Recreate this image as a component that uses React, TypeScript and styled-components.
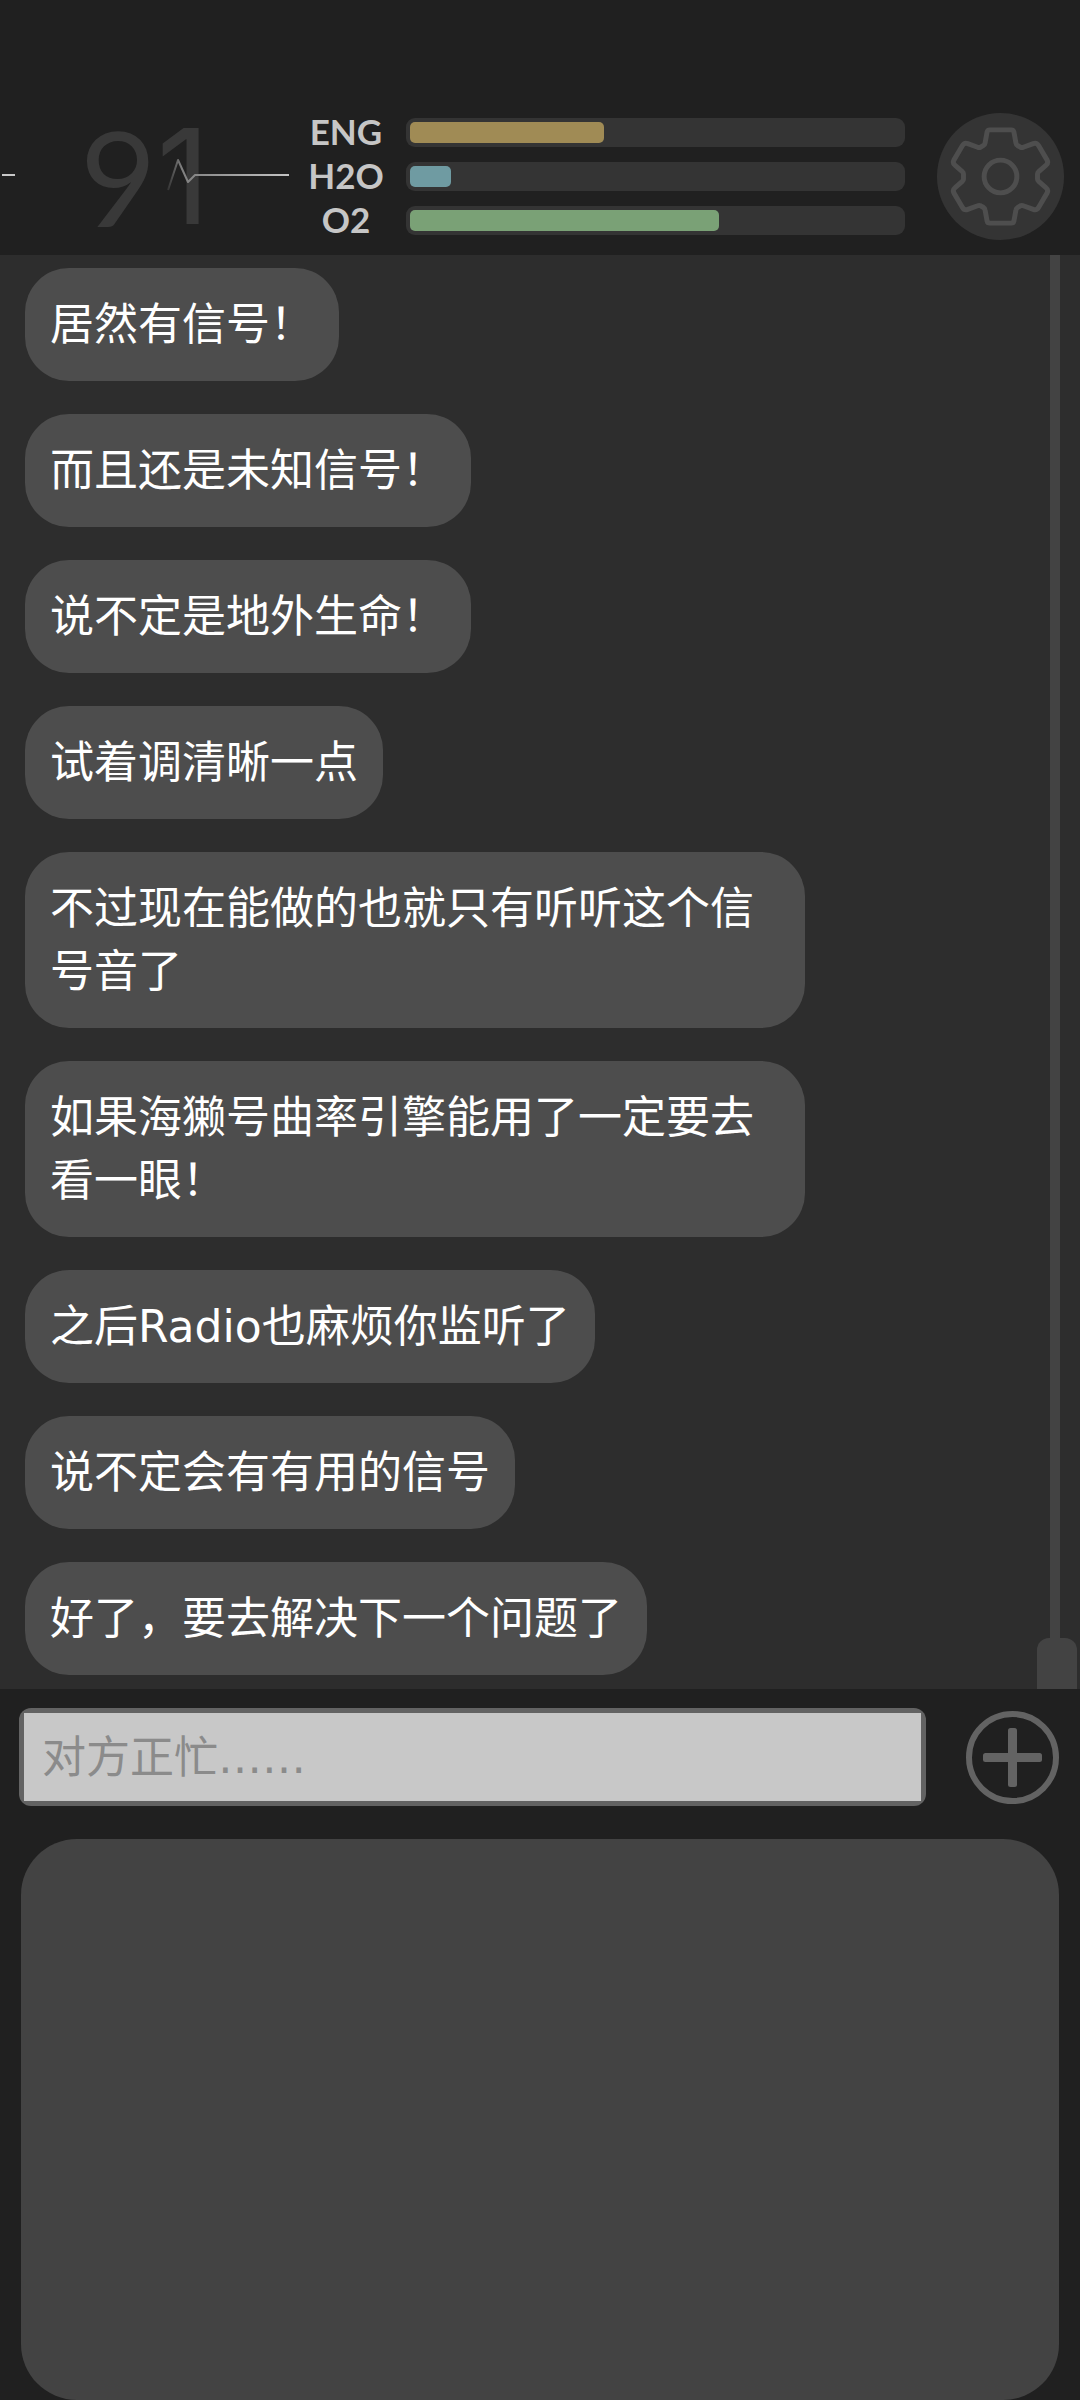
import React from "react";
import styled, { createGlobalStyle } from "styled-components";

const GlobalStyle = createGlobalStyle`
  *, *::before, *::after { box-sizing: border-box; }
  body {
    margin: 0;
    background: #202020;
    color: #ffffff;
    font-family: "DejaVu Sans", "Noto Sans CJK SC", sans-serif;
  }
`;

const Page = styled.div`
  display: flex;
  flex-direction: column;
  min-height: 100vh;
`;

const Header = styled.header`
  display: flex;
  align-items: center;
  padding: 113px 16px 15px 0;
`;

const Vitals = styled.div`
  position: relative;
  flex: none;
  width: 302px;
  height: 127px;
  padding-left: 80px;
`;

const HeartRate = styled.span`
  display: flex;
  color: #393939;
  font-family: Lato, sans-serif;
  font-size: 132px;
  line-height: 127px;
`;

const Units = styled.span`
  font-family: Inter, sans-serif;
`;

const Pulse = styled.svg`
  position: absolute;
  inset: 0;
  width: 302px;
  height: 127px;
`;

const Gauges = styled.div`
  flex: 1;
  display: grid;
  gap: 15px;
`;

const GaugeRow = styled.div`
  display: grid;
  grid-template-columns: 88px 1fr;
  column-gap: 16px;
`;

const GaugeLabel = styled.span`
  color: #c6c6c6;
  font-family: Lato, sans-serif;
  font-size: 35px;
  font-weight: 700;
  line-height: 27px;
  text-align: center;
`;

const GaugeTrack = styled.div`
  height: 29px;
  padding: 4px;
  border-radius: 9px;
  background: #343434;
`;

const GaugeFill = styled.div<{ $color: string }>`
  height: 100%;
  border-radius: 5px;
  background: ${({ $color }) => $color};
`;

const SettingsButton = styled.button`
  flex: none;
  width: 127px;
  height: 127px;
  margin-left: 32px;
  padding: 0;
  border: 0;
  border-radius: 50%;
  background: #343434;
  color: #4e4e4e;

  svg { display: block; width: 100%; height: 100%; }
`;

const Chat = styled.main`
  display: flex;
  justify-content: space-between;
  background: #2d2d2d;
`;

const Messages = styled.ul`
  flex: 1;
  display: flex;
  flex-direction: column;
  align-items: flex-start;
  gap: 33px;
  margin: 0;
  padding: 13px 25px 14px;
  list-style: none;
`;

const Bubble = styled.li`
  max-width: 780px;
  padding: 25px;
  border-radius: 44px;
  background: #4d4d4d;
  font-size: 44px;
  line-height: 63px;
  word-break: break-all;
`;

const ScrollBar = styled.div`
  display: flex;
  flex-direction: column;
  width: 40px;
  margin-right: 3px;
`;

const ScrollRail = styled.div`
  flex: 1;
  align-self: flex-end;
  width: 10px;
  margin-right: 17px;
  background: #434343;
`;

const ScrollThumb = styled.div`
  height: 51px;
  border-radius: 12px 12px 0 0;
  background: #434343;
`;

const Composer = styled.form`
  display: flex;
  align-items: center;
  gap: 40px;
  padding: 19px 21px 33px 19px;
`;

const Field = styled.label`
  flex: 1;
  display: flex;
  height: 98px;
  padding: 5px;
  border-radius: 12px;
  background: #636363;
`;

const TextInput = styled.input`
  flex: 1;
  min-width: 0;
  padding: 0 18px;
  border: 0;
  border-radius: 0;
  outline: 0;
  background: #c8c8c8;
  color: #323232;
  font-family: "DejaVu Sans", "Noto Sans CJK SC", sans-serif;
  font-size: 44px;

  &::placeholder { color: #8b8b8b; opacity: 1; }
`;

const AddButton = styled.button`
  flex: none;
  width: 93px;
  height: 93px;
  padding: 0;
  border: 0;
  background: none;
  color: #636363;

  svg { display: block; width: 100%; height: 100%; }
`;

const ReplyPanel = styled.section`
  flex: 1;
  min-height: 160px;
  margin: 0 21px;
  border-radius: 56px;
  background: #434343;
`;

const gauges = [
  { name: "ENG", level: 39.6, color: "#a08b55" },
  { name: "H2O", level: 8.4, color: "#6f9ba2" },
  { name: "O2", level: 63, color: "#7aa176" },
];

const messages = [
  "居然有信号！",
  "而且还是未知信号！",
  "说不定是地外生命！",
  "试着调清晰一点",
  "不过现在能做的也就只有听听这个信号音了",
  "如果海獭号曲率引擎能用了一定要去看一眼！",
  "之后Radio也麻烦你监听了",
  "说不定会有有用的信号",
  "好了，要去解决下一个问题了",
];

function PulseLine() {
  return (
    <Pulse viewBox="0 0 302 127" fill="none" strokeWidth="2" aria-hidden="true">
      <defs>
        <linearGradient id="trail" gradientUnits="userSpaceOnUse" x1="167" y1="0" x2="289" y2="0">
          <stop offset="0" stopColor="#303030" />
          <stop offset="0.12" stopColor="#808080" />
          <stop offset="1" stopColor="#c4c4c4" />
        </linearGradient>
      </defs>
      <path d="M2 62H15" stroke="#c8c8c8" />
      <path d="M168 77L178 47L188 69L195 62H289" stroke="url(#trail)" strokeLinejoin="round" />
    </Pulse>
  );
}

function GearIcon() {
  return (
    <svg viewBox="-64 -64 128 128" fill="none" stroke="currentColor" strokeWidth="5" strokeLinejoin="round" aria-hidden="true">
      <path d="M-11 -47H11Q13 -47 13.5 -45L15.5 -34Q15.800 -32 17.500 -31L20 -29.500Q21.500 -28.800 23 -29.500L33 -33.200Q36.500 -34.500 38.500 -31L47 -16.500Q48.500 -13.500 46 -11.500L38.500 -5Q37.300 -4 37.300 -2.500V2.500Q37.300 4 38.500 5L46 11.500Q48.500 13.500 47 16.500L38.500 31Q36.500 34.500 33 33.200L23 29.500Q21.500 28.800 20 29.500L17.500 31Q15.800 32 15.500 34L13.500 45Q13 47 11 47H-11Q-13 47 -13.500 45L-15.500 34Q-15.800 32 -17.500 31L-20 29.500Q-21.500 28.800 -23 29.500L-33 33.200Q-36.500 34.500 -38.500 31L-47 16.500Q-48.500 13.500 -46 11.500L-38.500 5Q-37.300 4 -37.300 2.500V-2.500Q-37.300 -4 -38.500 -5L-46 -11.500Q-48.500 -13.500 -47 -16.500L-38.500 -31Q-36.500 -34.500 -33 -33.200L-23 -29.500Q-21.500 -28.800 -20 -29.500L-17.500 -31Q-15.800 -32 -15.500 -34L-13.500 -45Q-13 -47 -11 -47Z" />
      <circle r="16.500" />
    </svg>
  );
}

function PlusIcon() {
  return (
    <svg viewBox="0 0 93 93" fill="none" stroke="currentColor" aria-hidden="true">
      <circle cx="46.500" cy="46.500" r="43.500" strokeWidth="6" />
      <g fill="currentColor" stroke="none">
        <rect x="17" y="42" width="59" height="9" rx="2.500" />
        <rect x="42" y="17" width="9" height="59" rx="2.500" />
      </g>
    </svg>
  );
}

export default function App() {
  return (
    <Page>
      <GlobalStyle />
      <Header>
        <Vitals>
          <HeartRate>
            9<Units>1</Units>
          </HeartRate>
          <PulseLine />
        </Vitals>
        <Gauges>
          {gauges.map(({ name, level, color }) => (
            <GaugeRow key={name}>
              <GaugeLabel id={`gauge-${name}`}>{name}</GaugeLabel>
              <GaugeTrack role="meter" aria-labelledby={`gauge-${name}`} aria-valuemin={0} aria-valuemax={100} aria-valuenow={level}>
                <GaugeFill $color={color} style={{ width: `${level}%` }} />
              </GaugeTrack>
            </GaugeRow>
          ))}
        </Gauges>
        <SettingsButton type="button" aria-label="设置">
          <GearIcon />
        </SettingsButton>
      </Header>
      <Chat>
        <Messages>
          {messages.map((text) => (
            <Bubble key={text}>{text}</Bubble>
          ))}
        </Messages>
        <ScrollBar aria-hidden="true">
          <ScrollRail />
          <ScrollThumb />
        </ScrollBar>
      </Chat>
      <Composer onSubmit={(event) => event.preventDefault()}>
        <Field>
          <TextInput type="text" aria-label="消息" placeholder="对方正忙……" />
        </Field>
        <AddButton type="button" aria-label="添加">
          <PlusIcon />
        </AddButton>
      </Composer>
      <ReplyPanel aria-label="回复选项" />
    </Page>
  );
}
